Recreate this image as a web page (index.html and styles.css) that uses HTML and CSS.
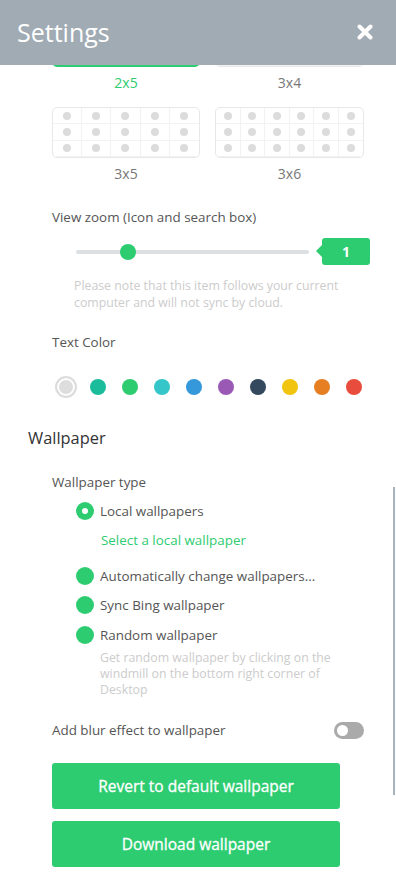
FILE: index.html
```html
<!DOCTYPE html>
<html>
<head>
<meta charset="utf-8">
<link rel="stylesheet" href="styles.css">
</head>
<body>
<div class="page">
  <header class="header">
    <h1 class="title">Settings</h1>
    <svg class="close" width="16" height="16" viewBox="0 0 16 16"><path d="M2.5 2.5 L13.5 13.5 M13.5 2.5 L2.5 13.5" stroke="#fff" stroke-width="4" stroke-linecap="round"/></svg>
  </header>

  <main class="content">
    <div class="layouts">
      <div class="layout">
        <div class="card selected g5">
          <i></i><i></i><i></i><i></i><i></i><i></i><i></i><i></i><i></i><i></i>
        </div>
        <div class="lbl active">2x5</div>
      </div>
      <div class="layout">
        <div class="card g4">
          <i></i><i></i><i></i><i></i><i></i><i></i><i></i><i></i><i></i><i></i><i></i><i></i>
        </div>
        <div class="lbl">3x4</div>
      </div>
      <div class="layout">
        <div class="card g5">
          <i></i><i></i><i></i><i></i><i></i><i></i><i></i><i></i><i></i><i></i><i></i><i></i><i></i><i></i><i></i>
        </div>
        <div class="lbl">3x5</div>
      </div>
      <div class="layout">
        <div class="card g6">
          <i></i><i></i><i></i><i></i><i></i><i></i><i></i><i></i><i></i><i></i><i></i><i></i><i></i><i></i><i></i><i></i><i></i><i></i>
        </div>
        <div class="lbl">3x6</div>
      </div>
    </div>

    <div class="label zoom-label">View zoom (Icon and search box)</div>
    <div class="slider-row">
      <div class="track"><span class="thumb"></span></div>
      <div class="value">1</div>
    </div>
    <p class="note">Please note that this item follows your current computer and will not sync by cloud.</p>

    <div class="label color-label">Text Color</div>
    <div class="swatches">
      <span class="sw first"></span>
      <span class="sw" style="background:#1abc9c"></span>
      <span class="sw" style="background:#2ecc71"></span>
      <span class="sw" style="background:#34c6c8"></span>
      <span class="sw" style="background:#3498db"></span>
      <span class="sw" style="background:#9b59b6"></span>
      <span class="sw" style="background:#34495e"></span>
      <span class="sw" style="background:#f1c40f"></span>
      <span class="sw" style="background:#e67e22"></span>
      <span class="sw" style="background:#e74c3c"></span>
    </div>

    <h2 class="section">Wallpaper</h2>
    <div class="label type-label">Wallpaper type</div>
    <div class="radio r-local"><span class="dot checked"></span>Local wallpapers</div>
    <div class="link">Select a local wallpaper</div>
    <div class="radio r-auto"><span class="dot"></span>Automatically change wallpapers...</div>
    <div class="radio r-sync"><span class="dot"></span>Sync Bing wallpaper</div>
    <div class="radio r-rand"><span class="dot"></span>Random wallpaper</div>
    <p class="desc">Get random wallpaper by clicking on the windmill on the bottom right corner of Desktop</p>

    <div class="blur-row">
      <span class="label">Add blur effect to wallpaper</span>
      <span class="toggle"><span class="knob"></span></span>
    </div>

    <button class="btn btn-first">Revert to default wallpaper</button>
    <button class="btn btn-second">Download wallpaper</button>
  </main>
  <div class="scrollbar"></div>
</div>
</body>
</html>
```

FILE: styles.css
```css
* { box-sizing: border-box; }
html, body { margin: 0; padding: 0; background: #fff; }
body {
  font-family: "Open Sans", "Noto Sans", sans-serif;
  font-size: 13.4px;
  color: #555;
  width: 396px;
  height: 886px;
  overflow: hidden;
}
.page { position: relative; width: 396px; height: 886px; }

.header {
  position: absolute;
  top: 0; left: 0; right: 0;
  height: 65px;
  background: #a0abb4;
  display: flex;
  align-items: center;
  justify-content: space-between;
  padding: 0 23px 0 17px;
  z-index: 2;
}
.title {
  margin: 0;
  font-size: 25px;
  font-weight: 400;
  color: #fff;
  line-height: 30px;
  padding-bottom: 1px;
}
.close { display: block; margin-top: -1px; }

.content { padding: 0 0 0 52px; }

.layouts {
  display: grid;
  grid-template-columns: 148px 149px;
  column-gap: 15px;
  row-gap: 14px;
  padding-top: 16px;
}
.card {
  height: 51px;
  border: 1px solid #e8e8e8;
  border-radius: 5px;
  display: grid;
  grid-auto-rows: 1fr;
  overflow: hidden;
}
.card.selected { border: 1px solid #2ecc71; border-bottom-width: 2px; }
.card.g4 { grid-template-columns: repeat(4, 1fr); }
.card.g5 { grid-template-columns: repeat(5, 1fr); }
.card.g6 { grid-template-columns: repeat(6, 1fr); }
.card i {
  display: flex;
  align-items: center;
  justify-content: center;
  border-right: 1px solid #f2f2f2;
  border-bottom: 1px solid #f2f2f2;
}
.card i::after {
  content: "";
  width: 8px; height: 8px;
  border-radius: 50%;
  background: #dcdcdc;
}
.card.g5 i:nth-child(5n), .card.g4 i:nth-child(4n), .card.g6 i:nth-child(6n) { border-right: none; }
.lbl {
  margin-top: 6px;
  text-align: center;
  line-height: 20px;
  font-size: 14px;
  color: #777;
}
.lbl.active { color: #2ecc71; }

.label { line-height: 20px; color: #555; }
.zoom-label { margin-top: 23px; }

.slider-row {
  margin-top: 11px;
  height: 27px;
  display: flex;
  align-items: center;
  padding-left: 24px;
}
.track {
  position: relative;
  width: 233px;
  height: 4px;
  border-radius: 2px;
  background: #dde0e2;
}
.thumb {
  position: absolute;
  left: 44px; top: -6px;
  width: 16px; height: 16px;
  border-radius: 50%;
  background: #2ecc71;
}
.value {
  position: relative;
  margin-left: 13px;
  width: 48px;
  height: 27px;
  background: #2ecc71;
  border-radius: 3px;
  color: #fff;
  font-weight: 700;
  font-size: 14px;
  display: flex;
  align-items: center;
  justify-content: center;
}
.value::before {
  content: "";
  position: absolute;
  left: -6px; top: 7px;
  border-top: 6px solid transparent;
  border-bottom: 6px solid transparent;
  border-right: 6px solid #2ecc71;
}

.note {
  margin: 12px 0 0 22px;
  width: 290px;
  font-size: 12.3px;
  line-height: 17px;
  color: #cccccc;
}

.color-label { margin-top: 21px; }
.swatches {
  margin-top: 24px;
  height: 22px;
  display: flex;
  align-items: center;
  gap: 16px;
  margin-left: 3px;
}
.sw {
  width: 16px; height: 16px;
  border-radius: 50%;
  flex: none;
}
.sw.first {
  width: 22px; height: 22px;
  background: #dddddd;
  border: 2px solid #dddddd;
  box-shadow: inset 0 0 0 2px #fff;
  margin-right: -3px;
}

.section {
  margin: 29px 0 0 -24px;
  font-size: 16.4px;
  font-weight: 400;
  line-height: 22px;
  color: #333;
}
.type-label { margin-top: 23px; }

.radio {
  display: flex;
  align-items: center;
  line-height: 20px;
  color: #555;
  margin-left: 24px;
}
.r-local { margin-top: 9px; }
.r-auto { margin-top: 16px; }
.r-sync { margin-top: 9px; }
.r-rand { margin-top: 10px; }
.dot {
  width: 18px; height: 18px;
  border-radius: 50%;
  background: #2ecc71;
  margin-right: 6px;
  flex: none;
  display: flex;
  align-items: center;
  justify-content: center;
}
.dot.checked::after {
  content: "";
  width: 6px; height: 6px;
  border-radius: 50%;
  background: #fff;
}
.link {
  margin: 9px 0 0 49px;
  line-height: 20px;
  color: #2ecc71;
}
.desc {
  margin: 5px 0 0 48px;
  width: 265px;
  font-size: 12.3px;
  line-height: 16px;
  color: #cccccc;
}

.blur-row {
  margin-top: 22px;
  display: flex;
  align-items: center;
  justify-content: space-between;
  width: 312px;
  height: 20px;
}
.toggle {
  width: 30px; height: 17px;
  border-radius: 9px;
  background: #aaaaaa;
  display: flex;
  align-items: center;
  padding-left: 3px;
}
.knob {
  width: 11px; height: 11px;
  border-radius: 50%;
  background: #fff;
}

.btn {
  display: block;
  width: 288px;
  height: 46px;
  border: none;
  border-radius: 3px;
  background: #2ecc71;
  color: #fff;
  font-family: "Open Sans", "Noto Sans", sans-serif;
  font-size: 15.5px;
  font-weight: 400;
  padding: 0;
  -webkit-text-stroke: 0.3px #fff;
}
.btn-first { margin-top: 23px; }
.btn-second { margin-top: 12px; }

.scrollbar {
  position: absolute;
  left: 393px;
  top: 487px;
  width: 2px;
  height: 308px;
  background: #a9b3bc;
}
```
